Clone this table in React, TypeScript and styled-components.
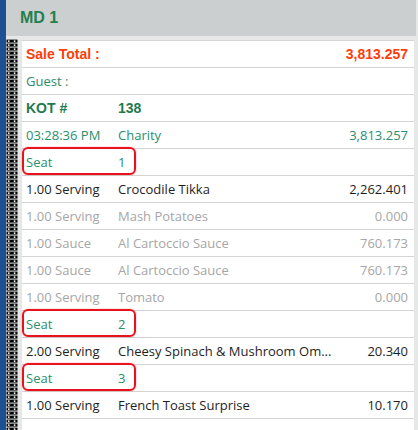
import React from "react";
import styled, { createGlobalStyle } from "styled-components";

const Global = createGlobalStyle`
  html, body { margin: 0; padding: 0; background: #ffffff; }
  body { font-family: "Open Sans", "Noto Sans", sans-serif; }
`;

const Page = styled.div`
  display: flex;
  width: 418px;
  height: 430px;
  overflow: hidden;
`;

const BlueStrip = styled.div`
  width: 6px;
  flex: none;
  background: #1d4f93;
`;

const Main = styled.div`
  flex: 1;
  display: flex;
  flex-direction: column;
  background: #e6e8e8;
  min-width: 0;
`;

const Header = styled.div`
  height: 36px;
  margin-right: 2px;
  background: #cbcfcf;
  display: flex;
  align-items: center;
  padding-left: 14px;
  font-family: "Liberation Sans", Arial, sans-serif;
  font-weight: bold;
  font-size: 16px;
  color: #23804f;
`;

const Body = styled.div`
  flex: 1;
  display: flex;
  padding-top: 2px;
  min-height: 0;
`;

const SpiralWrap = styled.div`
  width: 12px;
  flex: none;
  margin-top: 1px;
  margin-right: 4px;
  svg { display: block; }
`;

const Content = styled.div`
  flex: 1;
  margin-top: 2px;
  margin-right: 4px;
  background: #ffffff;
  border-top: 1px solid #d4d4d4;
  min-width: 0;
`;

type Tone = "total" | "muted" | "green" | "kot" | "normal" | "gray";

const toneColor: Record<Tone, string> = {
  total: "#ff3d0a",
  muted: "#2e8a6c",
  green: "#2a8f6c",
  kot: "#1f7a4e",
  normal: "#1e1e1e",
  gray: "#a6a6a6",
};

const Row = styled.div<{ $tone: Tone }>`
  position: relative;
  display: grid;
  grid-template-columns: 92px 1fr auto;
  align-items: center;
  height: 26px;
  border-bottom: 1px solid #d4d4d4;
  padding: 0 6px 0 4px;
  font-size: 13px;
  color: ${(p) => toneColor[p.$tone]};
  ${(p) =>
    p.$tone === "total" || p.$tone === "kot"
      ? `font-family: "Liberation Sans", Arial, sans-serif; font-weight: bold; font-size: 14px;`
      : ""}
`;

const Cell = styled.span`
  white-space: nowrap;
`;

const Amount = styled.span`
  text-align: right;
  white-space: nowrap;
`;

const SeatBox = styled.span`
  position: absolute;
  left: 0;
  top: -2px;
  width: 114px;
  height: 28px;
  box-sizing: border-box;
  border: 2px solid #e8121e;
  border-radius: 6px;
  box-shadow: 0 0 2px rgba(232, 18, 30, 0.35);
  pointer-events: none;
`;

const Spiral = () => (
  <svg width="12" height="392" viewBox="0 0 12 392">
    <defs>
      <pattern id="coil" width="12" height="4" patternUnits="userSpaceOnUse">
        <path d="M0.5 0.6 L11.5 0.6 L11.5 3.6 L0.5 3.6 Z" fill="#000" />
        <circle cx="2.8" cy="2.1" r="0.95" fill="#fff" />
        <circle cx="8.6" cy="2.1" r="0.95" fill="#fff" />
      </pattern>
    </defs>
    <rect width="12" height="392" fill="url(#coil)" />
  </svg>
);

type Item = { tone: Tone; a: string; b?: string; c?: string; seat?: boolean };

const rows: Item[] = [
  { tone: "total", a: "Sale Total :", c: "3,813.257" },
  { tone: "muted", a: "Guest :" },
  { tone: "kot", a: "KOT #", b: "138" },
  { tone: "green", a: "03:28:36 PM", b: "Charity", c: "3,813.257" },
  { tone: "green", a: "Seat", b: "1", seat: true },
  { tone: "normal", a: "1.00 Serving", b: "Crocodile Tikka", c: "2,262.401" },
  { tone: "gray", a: "1.00 Serving", b: "Mash Potatoes", c: "0.000" },
  { tone: "gray", a: "1.00 Sauce", b: "Al Cartoccio Sauce", c: "760.173" },
  { tone: "gray", a: "1.00 Sauce", b: "Al Cartoccio Sauce", c: "760.173" },
  { tone: "gray", a: "1.00 Serving", b: "Tomato", c: "0.000" },
  { tone: "green", a: "Seat", b: "2", seat: true },
  { tone: "normal", a: "2.00 Serving", b: "Cheesy Spinach & Mushroom Om...", c: "20.340" },
  { tone: "green", a: "Seat", b: "3", seat: true },
  { tone: "normal", a: "1.00 Serving", b: "French Toast Surprise", c: "10.170" },
];

export default function App() {
  return (
    <>
      <Global />
      <Page>
        <BlueStrip />
        <Main>
          <Header>MD 1</Header>
          <Body>
            <SpiralWrap>
              <Spiral />
            </SpiralWrap>
            <Content>
              {rows.map((r, i) => (
                <Row key={i} $tone={r.tone}>
                  <Cell>{r.a}</Cell>
                  <Cell>{r.b ?? ""}</Cell>
                  <Amount>{r.c ?? ""}</Amount>
                  {r.seat && <SeatBox />}
                </Row>
              ))}
            </Content>
          </Body>
        </Main>
      </Page>
    </>
  );
}
